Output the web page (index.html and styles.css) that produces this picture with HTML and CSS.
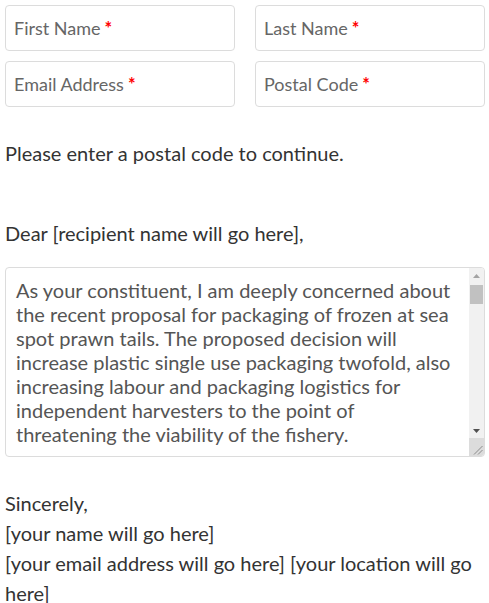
FILE: index.html
```html
<!DOCTYPE html>
<html lang="en">
<head>
  <meta charset="UTF-8">
  <title>Letter to your representative</title>
  <meta name="viewport" content="width=device-width, initial-scale=1.0">
  <link rel="stylesheet" href="styles.css">
</head>
<body>
  <div class="container">
    <div class="fields">
      <label class="field">
        <input type="text" id="firstName">
        <span class="ph">First Name<span class="req">*</span></span>
      </label>
      <label class="field">
        <input type="text" id="lastName">
        <span class="ph">Last Name<span class="req">*</span></span>
      </label>
      <label class="field">
        <input type="email" id="email">
        <span class="ph">Email Address<span class="req">*</span></span>
      </label>
      <label class="field">
        <input type="text" id="postal">
        <span class="ph">Postal Code<span class="req">*</span></span>
      </label>
    </div>

    <p class="notice">Please enter a postal code to continue.</p>

    <p class="dear">Dear [recipient name will go here],</p>

    <div class="letter-box">
      <textarea class="letter" id="letter">As your constituent, I am deeply concerned about the recent proposal for packaging of frozen at sea spot prawn tails. The proposed decision will increase plastic single use packaging twofold, also increasing labour and packaging logistics for independent harvesters to the point of threatening the viability of the fishery.

Frozen at sea spot prawn tails have been packed the same way for decades. The current practice is safe, well understood by buyers, and keeps a local product affordable for families in our communities.

Many harvesters are small, family run operations. The added cost of new packaging, extra handling on board and new storage requirements would fall hardest on them.

I ask that the proposal be paused until a fair solution is found that protects both the fishery and the environment.

Thank you for your time and for considering this request.</textarea>
      <!-- scrollbar drawn by hand: the screenshot browser hides real ones -->
      <div class="scrollbar">
        <div class="sb-btn">
          <svg width="7" height="4" viewBox="0 0 7 4"><polygon points="0,4 3.5,0 7,4" fill="#a3a3a3"/></svg>
        </div>
        <div class="sb-track">
          <div class="sb-thumb"></div>
        </div>
        <div class="sb-btn">
          <svg width="7" height="4" viewBox="0 0 7 4"><polygon points="0,0 7,0 3.5,4" fill="#505050"/></svg>
        </div>
        <div class="sb-corner">
          <svg width="10" height="10" viewBox="0 0 10 10">
            <line x1="1" y1="9.5" x2="9.5" y2="1" stroke="#8a8a8a" stroke-width="1"/>
            <line x1="5" y1="9.5" x2="9.5" y2="5" stroke="#8a8a8a" stroke-width="1"/>
          </svg>
        </div>
      </div>
    </div>

    <div class="signoff">
      <p>Sincerely,</p>
      <p>[your name will go here]</p>
      <p>[your email address will go here] [your location will go here]</p>
    </div>
  </div>
</body>
</html>
```

FILE: styles.css
```css
body {
  font-family: 'Lato', sans-serif;
  margin: 0;
  padding: 0;
  background-color: #fff;
  color: #333;
  font-size: 20px;
  line-height: 30px;
}

.container {
  padding: 5px 4px 0 5px;
}

.fields {
  display: grid;
  grid-template-columns: 1fr 1fr;
  column-gap: 20px;
  row-gap: 10px;
  margin-bottom: 31px;
}

.field {
  position: relative;
  display: block;
}

.field input {
  display: block;
  width: 100%;
  height: 46px;
  box-sizing: border-box;
  border: 1px solid #dcdcdc;
  border-radius: 4px;
  padding: 0 9px;
  font-family: 'Lato', sans-serif;
  font-size: 18px;
  color: #555;
  background: #fff;
}

.field .ph {
  position: absolute;
  left: 9px;
  top: 12px;
  font-size: 18px;
  line-height: 22px;
  color: #666;
  pointer-events: none;
}

.req {
  color: #f00;
  font-weight: 700;
  font-size: 18px;
  margin-left: 4px;
}

p {
  margin: 0;
}

.notice {
  margin-bottom: 50px;
}

.dear {
  margin-bottom: 19px;
}

.letter-box {
  display: flex;
  height: 190px;
  box-sizing: border-box;
  border: 1px solid #dcdcdc;
  border-radius: 4px;
  overflow: hidden;
  margin-bottom: 31px;
}

.letter {
  flex: 1;
  border: none;
  outline: none;
  padding: 10px;
  font-family: 'Lato', sans-serif;
  font-size: 20px;
  line-height: 24px;
  color: #555;
  resize: none;
  overflow: hidden;
  background: transparent;
}

.scrollbar {
  width: 15px;
  display: flex;
  flex-direction: column;
  background-color: #f1f1f1;
}

.sb-btn {
  height: 15px;
  display: flex;
  align-items: center;
  justify-content: center;
}

.sb-btn svg {
  display: block;
}

.sb-track {
  flex: 1;
  padding-top: 2px;
}

.sb-thumb {
  height: 19px;
  margin: 0 1px;
  background-color: #c1c1c1;
}

.sb-corner {
  height: 18px;
  background-color: #dcdcdc;
  display: flex;
  align-items: flex-end;
  justify-content: flex-end;
}

.sb-corner svg {
  display: block;
  margin: 0 1px 1px 0;
}
```
